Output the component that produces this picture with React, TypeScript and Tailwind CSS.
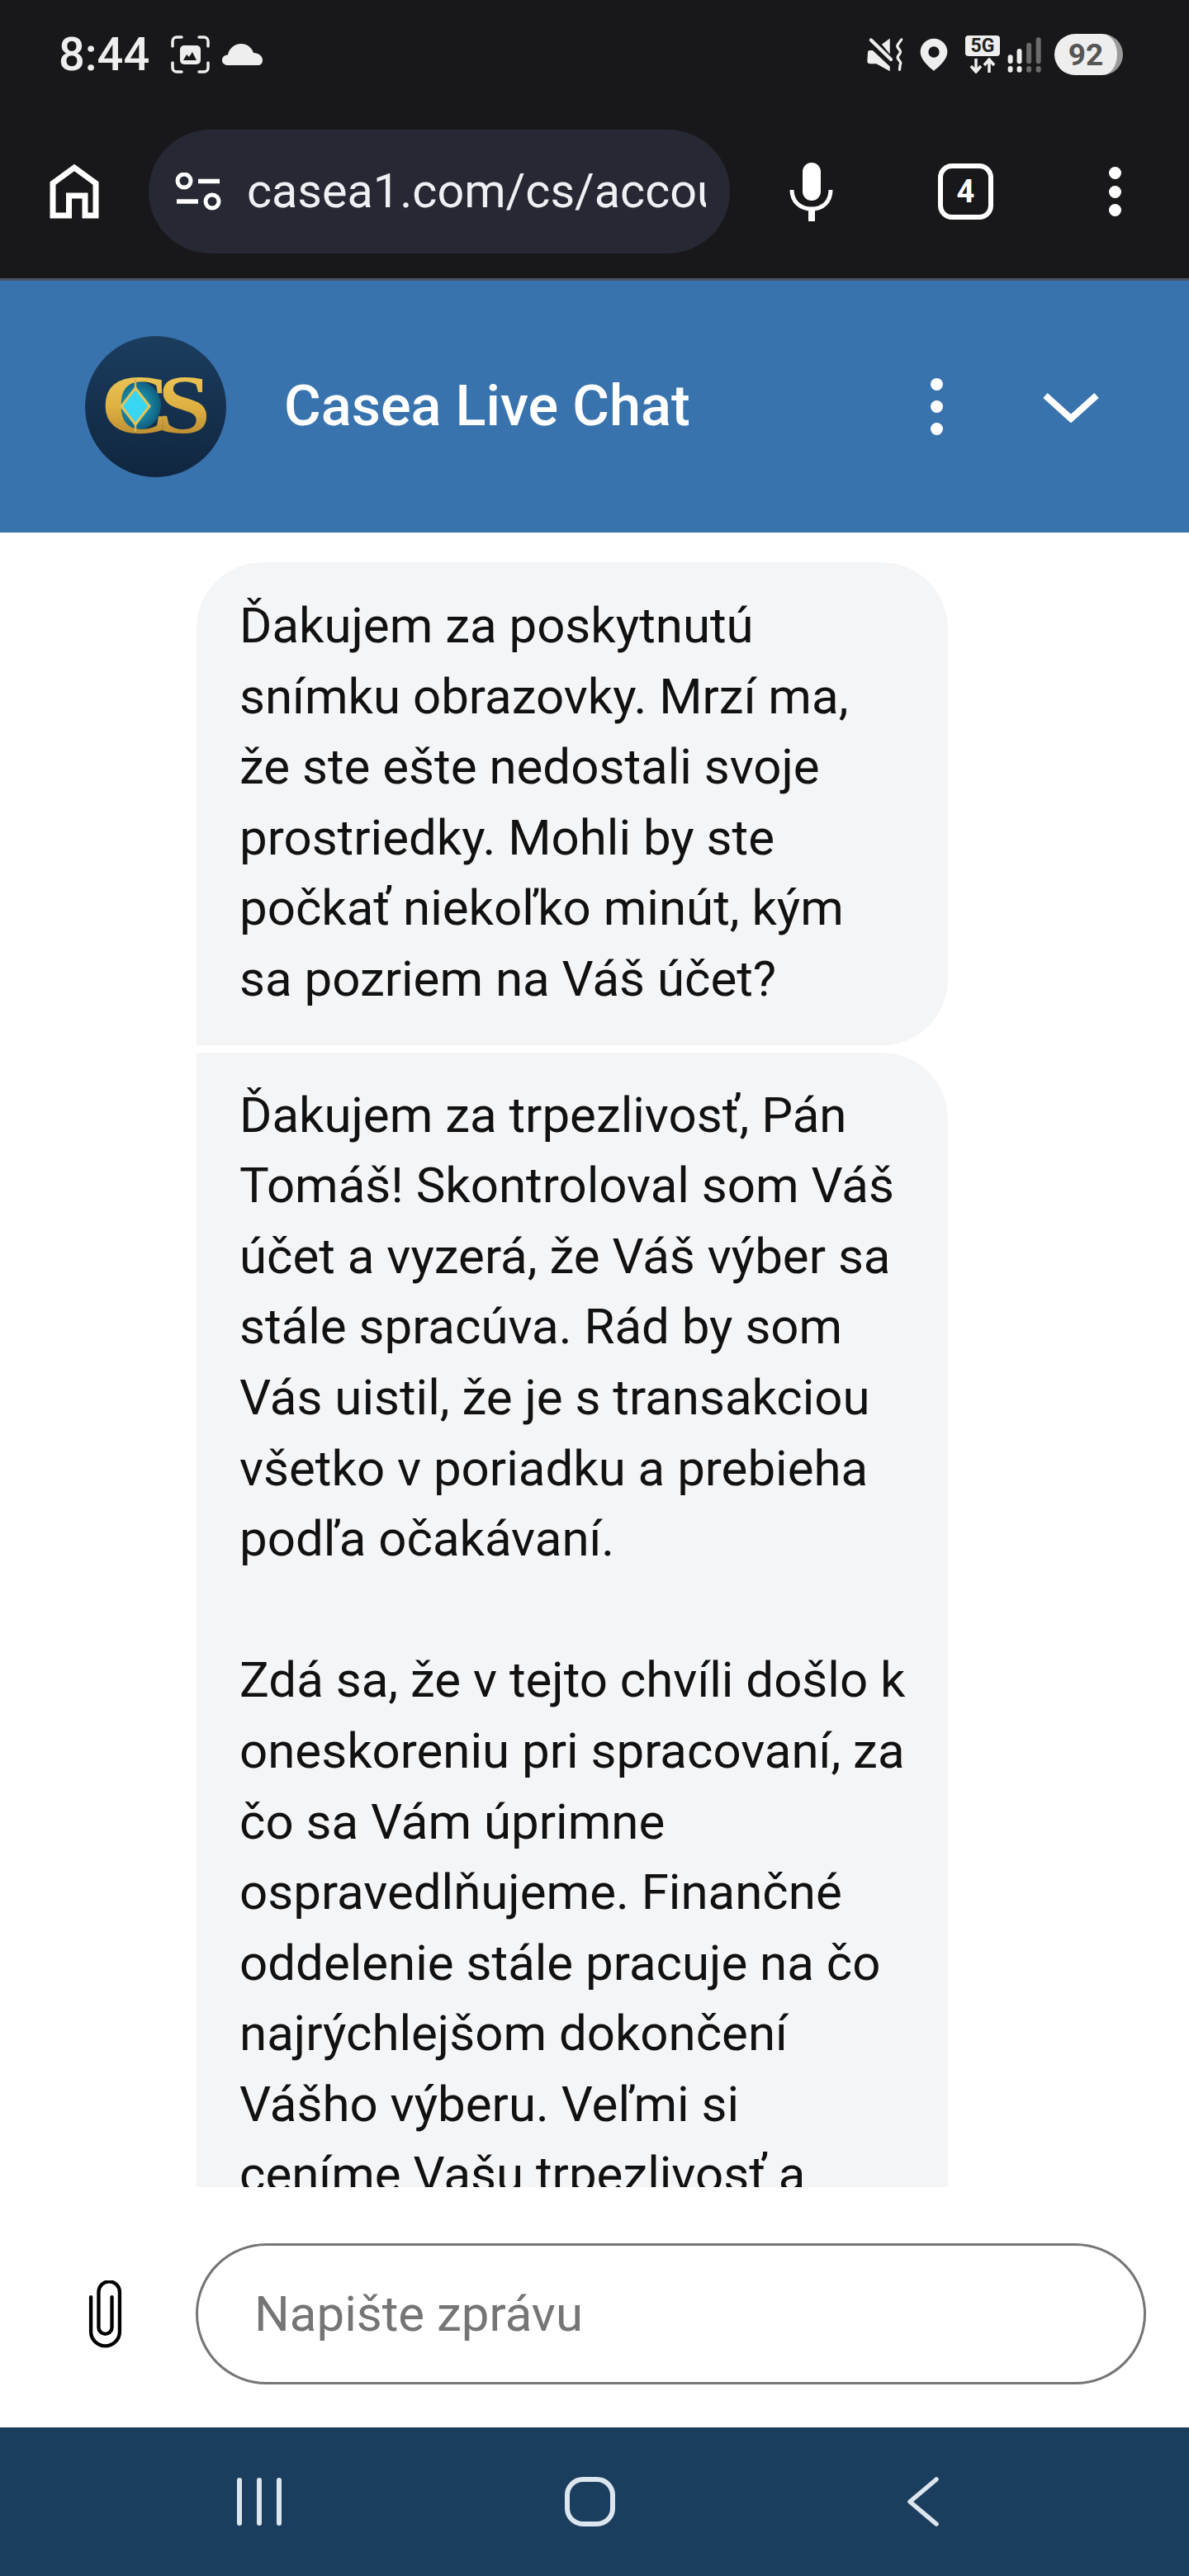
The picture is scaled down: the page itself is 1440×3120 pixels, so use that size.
import React from 'react';

const firstMessage = [
  'Ďakujem za poskytnutú',
  'snímku obrazovky. Mrzí ma,',
  'že ste ešte nedostali svoje',
  'prostriedky. Mohli by ste',
  'počkať niekoľko minút, kým',
  'sa pozriem na Váš účet?',
];

const secondMessage = [
  'Ďakujem za trpezlivosť, Pán',
  'Tomáš! Skontroloval som Váš',
  'účet a vyzerá, že Váš výber sa',
  'stále spracúva. Rád by som',
  'Vás uistil, že je s transakciou',
  'všetko v poriadku a prebieha',
  'podľa očakávaní.',
  '',
  'Zdá sa, že v tejto chvíli došlo k',
  'oneskoreniu pri spracovaní, za',
  'čo sa Vám úprimne',
  'ospravedlňujeme. Finančné',
  'oddelenie stále pracuje na čo',
  'najrýchlejšom dokončení',
  'Vášho výberu. Veľmi si',
  'ceníme Vašu trpezlivosť a',
];

const Lines = ({ lines }: { lines: string[] }) => (
  <>
    {lines.map((line, i) => (
      <div key={i} className="h-[85.6px] whitespace-nowrap">
        {line}
      </div>
    ))}
  </>
);

const ScreenshotIcon = () => (
  <svg width="47" height="46" viewBox="0 0 47 46" fill="none" className="ml-[26px]">
    <path d="M2 13V7a5 5 0 0 1 5-5h6M34 2h6a5 5 0 0 1 5 5v6M45 33v6a5 5 0 0 1-5 5h-6M13 44H7a5 5 0 0 1-5-5v-6" stroke="#eeeeee" strokeWidth="3.5" strokeLinecap="round" />
    <rect x="11" y="12" width="25" height="23" rx="5" fill="#eeeeee" />
    <path d="M15 30l4-7 3 3 4-6 5 10z" fill="#18181b" />
  </svg>
);

const CloudIcon = () => (
  <svg width="49" height="26" viewBox="0 0 49 26" className="ml-[15px]">
    <path d="M7 26c-4 0-7-2.500-7-6 0-4 3-6.500 7-6.500C8 6 15 0 23 0c7 0 13 4.500 15 11 6 0 11 3.500 11 9 0 4-2.500 6-6 6z" fill="#eeeeee" />
  </svg>
);

const MuteIcon = () => (
  <svg width="48" height="44" viewBox="35 22 145 135" fill="none">
    <path d="M40 82q0-8 8-8h10l64 60v18l-50-28H50q-12 0-12-10z" fill="#eeeeee" />
    <path d="M92 52l30-22v58z" fill="#eeeeee" />
    <path d="M52 36l74 72" stroke="#eeeeee" strokeWidth="13" strokeLinecap="round" />
    <path d="M165 34l-14 20q-3 6 2 12l6 8q4 6 0 12l-7 10q-3 6 2 12l6 8q4 6 0 12l-2 18" stroke="#eeeeee" strokeWidth="10" strokeLinecap="round" />
  </svg>
);

const PinIcon = () => (
  <svg width="34" height="40" viewBox="230 33 100 120" className="ml-[17px]">
    <path fillRule="evenodd" d="M280 35a49 49 0 0 1 49 49c0 28-34 57-49 68-15-11-49-40-49-68a49 49 0 0 1 49-49zm0 29a20 20 0 1 0 0 40 20 20 0 0 0 0-40z" fill="#eeeeee" />
  </svg>
);

const NetworkIcon = () => (
  <div className="ml-[21px] flex w-[42px] flex-col items-center">
    <div className="flex h-[25px] w-[42px] items-center justify-center rounded-[4px] bg-[#eeeeee] text-[23px] leading-none font-bold text-[#222222]">
      5G
    </div>
    <svg width="34" height="19" viewBox="0 0 34 19" fill="none" className="mt-[2px]">
      <path d="M9 1v15M3 10l6 7 6-7M25 18V3M19 9l6-7 6 7" stroke="#eeeeee" strokeWidth="3.500" />
    </svg>
  </div>
);

const SignalIcon = () => (
  <svg width="43" height="45" viewBox="30 25 130 135" className="ml-[8px]">
    <rect x="35" y="92" width="18" height="32" rx="9" fill="#eeeeee" />
    <rect x="68" y="70" width="18" height="55" rx="9" fill="#eeeeee" />
    <rect x="103" y="48" width="18" height="77" rx="9" fill="#6b6b6b" />
    <rect x="138" y="28" width="18" height="97" rx="9" fill="#6b6b6b" />
    <rect x="35" y="133" width="18" height="24" rx="9" fill="#eeeeee" />
    <rect x="68" y="133" width="18" height="24" rx="9" fill="#eeeeee" />
    <rect x="103" y="133" width="18" height="24" rx="9" fill="#6b6b6b" />
    <rect x="138" y="133" width="18" height="24" rx="9" fill="#6b6b6b" />
  </svg>
);

const StatusBar = () => (
  <div className="flex h-[132px] items-center justify-between pr-[80px] pl-[71px]">
    <div className="flex items-center">
      <span className="text-[56px] leading-none font-medium text-[#eeeeee]">8:44</span>
      <ScreenshotIcon />
      <CloudIcon />
    </div>
    <div className="flex items-center">
      <MuteIcon />
      <PinIcon />
      <NetworkIcon />
      <SignalIcon />
      <div className="ml-[15px] flex h-[50px] w-[83px] items-center justify-center overflow-hidden rounded-full border-r-[7px] border-[#9a9a9a] bg-[#eeeeee] text-[37px] leading-none font-bold text-[#555555]">
        92
      </div>
    </div>
  </div>
);

const BrowserBar = () => (
  <div className="flex h-[208px] items-start border-b-[3px] border-[#4a5563] pt-[25px] pl-[60px]">
    <div className="flex h-[150px] items-center">
      <svg width="60" height="68" viewBox="0 0 60 68" fill="none">
        <path d="M4 63V24L30 5l26 19v39H43V39H23.500v24z" stroke="#ffffff" strokeWidth="7" />
      </svg>
      <div className="ml-[60px] flex h-[150px] w-[704px] items-center overflow-hidden rounded-full bg-[#262933] pr-[29px] pl-[32px]">
        <svg width="57" height="46" viewBox="0 0 57 46" fill="none" className="shrink-0">
          <circle cx="11" cy="10" r="8" stroke="#ffffff" strokeWidth="5" />
          <path d="M28 10.500h26M2 35h26" stroke="#ffffff" strokeWidth="5.500" />
          <circle cx="45" cy="35" r="8" stroke="#ffffff" strokeWidth="5" />
        </svg>
        <div className="ml-[30px] overflow-hidden text-[57.5px] leading-none whitespace-nowrap text-[#eef0f3]">
          casea1.com/cs/account
        </div>
      </div>
      <svg width="53" height="71" viewBox="0 0 53 71" fill="none" className="ml-[72px]">
        <rect x="16" y="0" width="22" height="46" rx="11" fill="#ffffff" />
        <path d="M3 33c0 14 10 23 24 23s23-9 23-23" stroke="#ffffff" strokeWidth="5" />
        <path d="M27 54v17" stroke="#ffffff" strokeWidth="8" />
      </svg>
      <div className="ml-[127px] flex h-[68px] w-[67px] items-center justify-center rounded-[17px] border-[6px] border-white text-[38px] leading-none font-bold text-white">
        4
      </div>
      <div className="ml-[140px] flex flex-col gap-[7.500px]">
        <span className="h-[15px] w-[15px] rounded-full bg-white" />
        <span className="h-[15px] w-[15px] rounded-full bg-white" />
        <span className="h-[15px] w-[15px] rounded-full bg-white" />
      </div>
    </div>
  </div>
);

const Logo = () => (
  <svg width="171" height="171" viewBox="0 0 171 171">
    <defs>
      <linearGradient id="bg" x1="0" y1="0" x2="0" y2="1">
        <stop offset="0" stopColor="#1b3d5e" />
        <stop offset="1" stopColor="#10263f" />
      </linearGradient>
      <linearGradient id="gold" x1="0" y1="0" x2="0" y2="1">
        <stop offset="0" stopColor="#f2d060" />
        <stop offset="0.55" stopColor="#dcae40" />
        <stop offset="1" stopColor="#a8782a" />
      </linearGradient>
      <radialGradient id="glow">
        <stop offset="0" stopColor="#22b6cf" />
        <stop offset="1" stopColor="#0f5c7c" />
      </radialGradient>
    </defs>
    <circle cx="85.500" cy="85.500" r="85.500" fill="url(#bg)" />
    <circle cx="62" cy="84" r="30" fill="url(#glow)" />
    <text x="19" y="118" textLength="84" lengthAdjust="spacingAndGlyphs" fontFamily="'Liberation Serif', serif" fontWeight="700" fontSize="102" fill="url(#gold)">C</text>
    <text x="88" y="118" textLength="64" lengthAdjust="spacingAndGlyphs" fontFamily="'Liberation Serif', serif" fontWeight="700" fontSize="102" fill="url(#gold)">S</text>
    <path d="M61 52v64" stroke="#d9b24a" strokeWidth="2.500" />
    <path d="M61 63l17 22-17 22-17-22z" fill="#38d6f2" stroke="#e3c45c" strokeWidth="3" />
  </svg>
);

const ChatHeader = () => (
  <div className="flex h-[305px] items-center bg-[#3873ae] pl-[103px]">
    <Logo />
    <div className="ml-[70px] text-[68.5px] leading-none font-medium text-white">Casea Live Chat</div>
    <div className="ml-[291px] flex flex-col gap-[12px]">
      <span className="h-[15px] w-[15px] rounded-full bg-white" />
      <span className="h-[15px] w-[15px] rounded-full bg-white" />
      <span className="h-[15px] w-[15px] rounded-full bg-white" />
    </div>
    <svg width="70" height="38" viewBox="0 0 70 38" fill="none" className="ml-[120px]">
      <path d="M4 5l31 28L66 5" stroke="#ffffff" strokeWidth="8" />
    </svg>
  </div>
);

const Messages = () => (
  <div className="h-[2004px] overflow-hidden bg-white pt-[36px] pl-[238px] text-[60px] leading-[85.6px] text-[#111111]">
    <div className="w-[910px] rounded-t-[80px] rounded-br-[80px] bg-[#f4f5f7] pt-[34px] pb-[37px] pl-[52px]">
      <Lines lines={firstMessage} />
    </div>
    <div className="mt-[9px] w-[910px] rounded-tr-[80px] bg-[#f4f5f7] pt-[33px] pl-[52px]">
      <Lines lines={secondMessage} />
    </div>
  </div>
);

const InputRow = () => (
  <div className="flex h-[291px] items-start bg-white pt-[68px] pl-[106px]">
    <div className="flex h-[171px] items-center">
      <svg width="42" height="82" viewBox="30 20 125 245" fill="none">
        <path d="M42 80v125a52 52 0 0 0 104 0V62a38 38 0 0 0-76 0v128a24 24 0 0 0 48 0V80" stroke="#000000" strokeWidth="13" strokeLinecap="round" />
      </svg>
      <div className="ml-[89px] flex h-[171px] w-[1151px] items-center rounded-full border-[3px] border-[#757575] pl-[68px] text-[60px] leading-none text-[#757575]">
        Napište zprávu
      </div>
    </div>
  </div>
);

const AndroidNav = () => (
  <div className="flex h-[180px] items-center bg-[#1c3e5e] pl-[287px]">
    <div className="flex h-[58px] gap-[18px]">
      <span className="w-[6px] rounded-full bg-[#dce6ef]" />
      <span className="w-[6px] rounded-full bg-[#dce6ef]" />
      <span className="w-[6px] rounded-full bg-[#dce6ef]" />
    </div>
    <div className="ml-[343px] h-[60px] w-[61px] rounded-[22px] border-[6px] border-[#dce6ef]" />
    <svg width="38" height="60" viewBox="0 0 38 60" fill="none" className="ml-[354px]">
      <path d="M35 3L3 30l32 27" stroke="#dce6ef" strokeWidth="5.500" strokeLinecap="round" strokeLinejoin="round" />
    </svg>
  </div>
);

export default function App() {
  return (
    <div className="h-[3120px] w-[1440px] overflow-hidden font-['Roboto',sans-serif]">
      <div className="bg-[#18181b]">
        <StatusBar />
        <BrowserBar />
      </div>
      <ChatHeader />
      <Messages />
      <InputRow />
      <AndroidNav />
    </div>
  );
}
